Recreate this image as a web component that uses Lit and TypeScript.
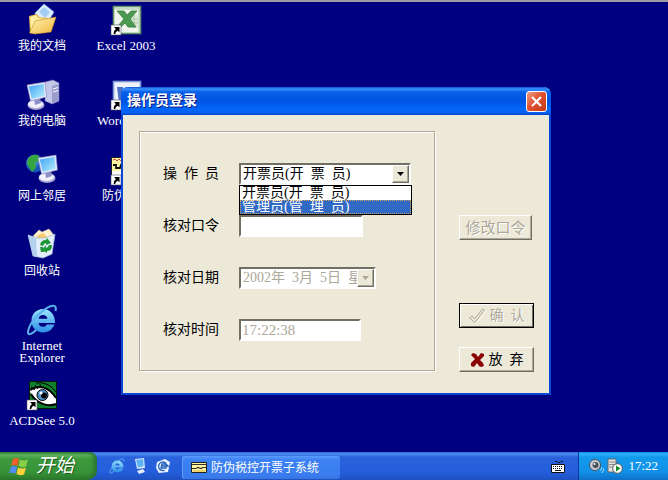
import { LitElement, html, css, svg, nothing } from "lit";
import { customElement, property, state } from "lit/decorators.js";
import { classMap } from "lit/directives/class-map.js";

const shortcut = svg`
  <rect x="1" y="21" width="10" height="10" fill="#fff" stroke="#556" stroke-width=".6"/>
  <path d="M4 23h5.500v5.500L7.800 26.800Q5.500 27.800 5.200 30H3.600Q3.400 26.500 5.900 24.900z" fill="#000"/>`;

const monitor = (x: number, y: number) => svg`
  <g transform="translate(${x} ${y})">
    <ellipse cx="9" cy="23" rx="8.500" ry="5" fill="#a9a8d2"/>
    <ellipse cx="8.500" cy="22" rx="7.500" ry="4" fill="#f0effb"/>
    <path d="M7 16l6-1 1 6-6 2z" fill="#8e8fc4"/>
    <path d="M0 3L18 0l1.500 15L3.500 19z" fill="#e6e9fa" stroke="#8187bd" stroke-width=".6"/>
    <path d="M1.800 4.500L16.500 2l1.200 11.800L4.800 17z" fill="url(#scr)"/>
  </g>`;

const defs = svg`
  <defs>
    <linearGradient id="scr" x1="0" y1="0" x2="1" y2="1">
      <stop offset="0" stop-color="#3aa2f4"/><stop offset="1" stop-color="#bdf0ff"/>
    </linearGradient>
    <linearGradient id="fold" x1="0" y1="0" x2="1" y2="1">
      <stop offset="0" stop-color="#fff6b8"/><stop offset="1" stop-color="#f0b53a"/>
    </linearGradient>
    <linearGradient id="ie" x1="0" y1="0" x2="0" y2="1">
      <stop offset="0" stop-color="#9be4ff"/><stop offset="1" stop-color="#2a8ee6"/>
    </linearGradient>
    <radialGradient id="globe" cx=".35" cy=".3">
      <stop offset="0" stop-color="#8fd4f8"/><stop offset="1" stop-color="#1557b8"/>
    </radialGradient>
  </defs>`;

const ieMark = svg`
  <path d="M17 5C10.500 5 5.500 10 5.500 16.800S10.500 28.500 17 28.500c5.400 0 9.600-3 11.300-8h-7.500c-.8 1.600-2 2.300-3.800 2.300-2.500 0-4.200-1.300-4.500-3.700H29C29.500 11 24 5 17 5zm-4.400 9.800c.5-2.400 2-3.700 4.400-3.700s3.900 1.300 4.400 3.700z" fill="url(#ie)"/>
  <path d="M10 26C5 31 1.500 31.500 2 27.500 3 20 12 9 21.500 3.600 27 .5 31 1 29.500 7" fill="none" stroke="#5cb0ee" stroke-width="2"/>`;

const art: Record<string, unknown> = {
  docs: svg`
    <path d="M9 9L18 0l10 8-8 13-9-4z" fill="#dceeff" stroke="#78aee0" stroke-width=".7"/>
    <path d="M13 8l5-5 6 5-5 6z" fill="#a4cdf3"/>
    <path d="M3 12l8-2 2 3 9 1-2 15H4z" fill="#e9b84a"/>
    <path d="M4 13l6-2 2 3 8 1-1 12H5z" fill="#fff0a4"/>
    <path d="M3.500 29L9 17l21-4-5 15-16 2z" fill="url(#fold)" stroke="#c98c1c" stroke-width=".6"/>`,
  computer: svg`
    <path d="M19 3l8-2 6 3v18l-7 3-7-3z" fill="#c5c7e8" stroke="#7a7cab" stroke-width=".5"/>
    <path d="M26 7l7-2v17l-7 3z" fill="#9a9ccc"/>
    <path d="M27 10l5-1.500M27 13l5-1.500" stroke="#fff"/>
    ${monitor(1, 3)}`,
  network: svg`
    <circle cx="9" cy="9.500" r="9" fill="url(#globe)"/>
    <path d="M2 5Q6 0 12 1l2 5-5 3 1 5-4 4-3-5-2-3z" fill="#35a53e"/>
    ${monitor(12, 1)}`,
  recycle: svg`
    <path d="M8 6l5-5 3 2 7-3 4 5 1 5H6z" fill="#fff1ce" stroke="#d8c9a0" stroke-width=".6"/>
    <path d="M11 7l6-3 4 4v4h-9z" fill="#f7c96c"/>
    <path d="M2 6l9 3h8l10-4-3 20-9 4-10-2z" fill="#e4eefa" stroke="#9ab9dc" stroke-width=".7"/>
    <path d="M2 6l8 3 1 19-4-1z" fill="#b5d0ee"/>
    <path d="M14 16q1-5 6-5l1-2 4 5-5 2v-2q-2 0-3 3zM26 16q0 6-5 6v2l-5-3 4-5v3q2 0 3-3zM14 18h3l1 5h-3z" fill="#1f9632"/>`,
  ie: ieMark,
  acd: svg`
    <rect x="3.500" y="2.500" width="27" height="27" fill="#11802d" stroke="#061c0a"/>
    <path d="M4 11C12 6 22 8 30 18v7C22 28 11 26 4 13z" fill="#fff"/>
    <path d="M4 11C13 5 23 8 30 19M5 15C11 25 22 28 30 25" fill="none" stroke="#000" stroke-width="2"/>
    <path d="M5 8l4 3M9 6l3 4M14 5l1 4M10 4Q22 2 30 13" stroke="#000" fill="none"/>
    <circle cx="16.500" cy="16" r="5.500" fill="#4d92c8" stroke="#000"/>
    <circle cx="18" cy="16.500" r="3" fill="#000"/><circle cx="15" cy="14" r="1.600" fill="#fff"/>
    ${shortcut}`,
  excel: svg`
    <rect x="3.500" y="2.500" width="27" height="27" fill="#f1f6ec" stroke="#5e9465" stroke-width="1.600"/>
    <path d="M5 5h24v23" fill="none" stroke="#b9d2b5" stroke-width="1.400"/>
    <path d="M20 11h8v13h-9z" fill="#dbe8d4"/><path d="M20 15h8M20 19h8M24 11v13" stroke="#a9c8a6"/>
    <path d="M7 7h7l3 4 4-4h6l-7 8 6 8h-8l-3-4-4 4H7l7-8z" fill="#4c9a50" stroke="#2c7038" stroke-width=".7"/>
    ${shortcut}`,
  word: svg`
    <rect x="3.500" y="2.500" width="27" height="27" fill="#edf2fc" stroke="#7d97d6" stroke-width="1.600"/>
    <path d="M7 8h6l2 12 3-12h5l-5 16h-5l-1-7-2 7H9z" fill="#4c70c4"/>
    ${shortcut}`,
  tax: svg`
    <rect x="1.500" y="3.500" width="30" height="26" fill="#fff7a0" stroke="#222"/>
    <path d="M3 6l2-1 2 2 2-2 2 2 2-2" stroke="#c44" fill="none"/>
    <path d="M3 11h3v3h4l1-3 3 2" stroke="#111" stroke-width="1.800" fill="none"/>
    <path d="M2 17h10v4H2z" fill="#fff"/>
    ${shortcut}`,
};

interface Shortcut { icon: string; label: string; }

const shortcuts: Shortcut[] = [
  { icon: "docs", label: "我的文档" },
  { icon: "computer", label: "我的电脑" },
  { icon: "network", label: "网上邻居" },
  { icon: "recycle", label: "回收站" },
  { icon: "ie", label: "Internet Explorer" },
  { icon: "acd", label: "ACDSee 5.0" },
  { icon: "excel", label: "Excel 2003" },
  { icon: "word", label: "Word 2003" },
  { icon: "tax", label: "防伪税控" },
];

const operators = ["开票员(开\u2002票\u2002员)", "管理员(管\u2002理\u2002员)"];

@customElement("desktop-icon")
class DesktopIcon extends LitElement {
  @property() icon = "";
  @property() label = "";

  static styles = css`
    :host { display: block; padding-top: 2px; }
    .link {
      display: flex; flex-direction: column; align-items: center; gap: 4px;
      color: #fff; text-decoration: none; text-align: center;
      font-size: 12px; line-height: 12px;
    }
    .latin { font-size: 13px; }
    .pic { width: 32px; height: 32px; overflow: visible; }
    .label { max-width: 70px; }
  `;

  render() {
    const latin = /^[A-Z]/.test(this.label);
    return html`<a class=${classMap({ link: true, latin })} href="#">
      <svg class="pic" viewBox="0 0 32 32" aria-hidden="true">${defs}${art[this.icon] ?? nothing}</svg>
      <span class="label">${this.label}</span>
    </a>`;
  }
}

@customElement("login-dialog")
class LoginDialog extends LitElement {
  @state() private selected = 0;
  @state() private hot = 1;

  static styles = css`
    :host {
      display: block; box-sizing: border-box; width: 430px; max-width: 100%;
      background: #ece9d8; border: 2px solid #0a45d8; border-top: 0;
      border-radius: 7px 7px 0 0; font-size: 14px; line-height: 14px; color: #000;
    }
    .title {
      display: flex; align-items: center; justify-content: space-between;
      height: 28px; margin: 0 -2px; padding: 0 4px 0 6px; box-sizing: border-box;
      border-radius: 7px 7px 0 0; color: #fff; text-shadow: 1px 1px #0a1883;
      background: linear-gradient(#0a50d8 0, #3a93ff 2px, #0a5fe8 5px, #0054e3 14px, #0466fb 22px, #0560f0 26px, #0040c0 28px);
    }
    .heading { margin: 0; font-size: 14px; line-height: 28px; }
    .close {
      width: 21px; height: 21px; padding: 0; border: 1px solid #fff; border-radius: 3px;
      background: linear-gradient(135deg, #f0a088, #e1512f 45%, #c23a16); display: grid; place-items: center;
    }
    .body { display: flex; gap: 24px; padding: 16px 15px 21px 16px; }
    .group {
      flex: 1; min-width: 0; margin: 0; padding: 31px 0 29px 23px; box-sizing: border-box;
      border: 1px solid #aca899; box-shadow: inset 1px 1px #fff, 1px 1px #fff;
      display: flex; flex-direction: column; gap: 30px; align-self: flex-start;
    }
    .row { display: flex; align-items: center; gap: 20px; height: 22px; }
    .label { width: 56px; text-align-last: justify; white-space: nowrap; }
    .field { position: relative; display: flex; }
    .box {
      box-sizing: border-box; width: 100%; height: 22px; margin: 0; padding: 0 2px;
      appearance: none; border: 2px solid; border-color: #716f64 #fff #fff #716f64; border-radius: 0;
      background: #fff; color: #000; font-family: inherit; font-size: 14px; line-height: 18px; outline: 0;
    }
    .box:disabled { color: #aca899; opacity: 1; }
    .time { font-size: 15px; padding: 0 1px; }
    .w-op { width: 172px; }
    .w-pw { width: 124px; }
    .w-date { width: 137px; }
    .w-time { width: 122px; }
    .arrow {
      position: absolute; right: 2px; top: 2px; width: 17px; height: 18px; box-sizing: border-box;
      background: #ece9d8; border: 1px solid; border-color: #fff #716f64 #716f64 #fff;
      box-shadow: inset -1px -1px #aca899; display: grid; place-items: center; pointer-events: none;
    }
    .arrow.off { color: #aca899; }
    .list {
      position: absolute; z-index: 2; left: 0; top: 100%; width: 173px; box-sizing: border-box;
      margin: 0; padding: 0; list-style: none; border: 1px solid #000; background: #fff;
    }
    .item { height: 14px; padding: 0 2px; white-space: nowrap; }
    .item.hot { background: #316ac5; color: #fff; outline: 1px dotted #d0a060; outline-offset: -1px; }
    .actions { display: flex; flex-direction: column; width: 75px; padding-top: 84px; }
    .btn {
      height: 25px; padding: 0; border: 1px solid; border-color: #fff #716f64 #716f64 #fff;
      box-shadow: inset -1px -1px #aca899; background: #ece9d8; color: #000; border-radius: 0;
      font-family: inherit; font-size: 14px; line-height: 14px; white-space: nowrap;
      display: flex; align-items: center; justify-content: center; gap: 4px;
    }
    .btn:disabled { color: #aca899; text-shadow: 1px 1px #fff; }
    .change { width: 73px; font-size: 15px; }
    .primary { margin-top: 63px; border-color: #000; box-shadow: inset 1px 1px #fff, inset -1px -1px #716f64; }
    .cancel { margin-top: 19px; }
    .caption { width: 35px; text-align-last: justify; }
  `;

  private arrow(off = false) {
    return html`<span class=${classMap({ arrow: true, off })}>
      <svg width="7" height="4" viewBox="0 0 7 4" aria-hidden="true"><path d="M0 0h7L3.500 4z" fill="currentColor"/></svg>
    </span>`;
  }

  render() {
    return html`
      <header class="title">
        <h1 class="heading">操作员登录</h1>
        <button class="close" aria-label="关闭">
          <svg width="13" height="13" viewBox="0 0 13 13" aria-hidden="true">
            <path d="M2 2l9 9M11 2l-9 9" stroke="#fff" stroke-width="2.200"/>
          </svg>
        </button>
      </header>
      <form class="body" @submit=${(e: Event) => e.preventDefault()}>
        <div class="group">
          <div class="row">
            <label class="label" for="op">操 作 员</label>
            <div class="field w-op">
              <select class="box" id="op">
                ${operators.map((o, i) => html`<option ?selected=${i === this.selected}>${o}</option>`)}
              </select>
              ${this.arrow()}
              <ul class="list" role="listbox" aria-label="操作员">
                ${operators.map((o, i) => html`<li role="option" aria-selected=${i === this.hot}
                  class=${classMap({ item: true, hot: i === this.hot })}
                  @mouseenter=${() => (this.hot = i)} @click=${() => (this.selected = i)}>${o}</li>`)}
              </ul>
            </div>
          </div>
          <div class="row">
            <label class="label" for="pw">核对口令</label>
            <div class="field w-pw"><input class="box" id="pw" type="password"></div>
          </div>
          <div class="row">
            <label class="label" for="date">核对日期</label>
            <div class="field w-date">
              <select class="box" id="date" disabled><option>2002年${"\u2002"}3月${"\u2002"}5日${"\u2002"}星期二</option></select>
              ${this.arrow(true)}
            </div>
          </div>
          <div class="row">
            <label class="label" for="time">核对时间</label>
            <div class="field w-time"><input class="box time" id="time" value="17:22:38" disabled></div>
          </div>
        </div>
        <div class="actions">
          <button class="btn change" type="button" disabled>修改口令</button>
          <button class="btn primary" disabled>
            <svg width="17" height="16" viewBox="0 0 17 16" aria-hidden="true">
              <path d="M1.500 11l3-2 2 3 8-10 2 1-9.500 12.500z" fill="none" stroke="#fff"/>
              <path d="M.5 10l3-2 2 3 8-10 2 1L6 14.500z" fill="#ece9d8" stroke="#aca899"/>
            </svg>
            <span class="caption">确 认</span>
          </button>
          <button class="btn cancel" type="button">
            <svg width="15" height="15" viewBox="0 0 15 15" aria-hidden="true">
              <path d="M1 3l2-2 3 1 2 3 3-4 3 1v2l-4 4 3 3 1 3-3 1-2-1-2-3-3 4-3-1v-3l4-4z" fill="#8b0000"/>
            </svg>
            <span class="caption">放 弃</span>
          </button>
        </div>
      </form>`;
  }
}

@customElement("task-bar")
class TaskBar extends LitElement {
  static styles = css`
    :host {
      display: flex; align-items: stretch; height: 28px; color: #fff; font-size: 12px;
      background: linear-gradient(#3168d5 0, #4a8df0 2px, #2a62dc 5px, #245edb 20px, #1e50c0 28px);
    }
    .start {
      width: 97px; padding: 0 0 0 9px; border: 0; border-radius: 0 8px 10px 0; color: #fff;
      display: flex; align-items: center; gap: 6px;
      font-family: inherit; font-size: 19px; line-height: 26px; font-style: italic; text-shadow: 1px 1px #1c5a1c;
      background: linear-gradient(#388238 0, #5fb55f 3px, #3c9a3c 7px, #389338 20px, #2a7a2a 28px);
      box-shadow: inset -3px 0 4px #2a7030;
    }
    .quick { display: flex; align-items: center; gap: 7px; padding-left: 12px; }
    .tool { width: 16px; height: 16px; padding: 0; border: 0; background: none; display: block; }
    .task {
      flex: 0 1 158px; margin: 4px 0 1px 11px; padding: 0 0 0 9px; border: 0; border-radius: 3px;
      background: linear-gradient(#5a9bff 0, #3c81f3 4px, #3a7cee 20px, #3570dc 24px);
      box-shadow: inset 1px 0 #5c9dff; color: #fff; font-family: inherit; font-size: 12px; line-height: 16px;
      display: flex; align-items: center; gap: 4px; white-space: nowrap;
    }
    .lang { margin-left: auto; padding-right: 13px; align-self: center; line-height: 0; }
    .tray {
      width: 90px; box-sizing: border-box; padding: 0 10px; display: flex; align-items: center; gap: 3px;
      border-left: 1px solid #0a3a9a;
      background: linear-gradient(#0f8be6 0, #2cb0f8 2px, #129aec 5px, #1290e8 20px, #0c70c8 28px);
    }
    .clock { margin-left: auto; font-size: 13px; }
  `;

  render() {
    return html`
      <button class="start">
        <svg width="21" height="19" viewBox="0 0 21 19" aria-hidden="true">
          <path d="M4 2Q7 0 10 2L8.500 9Q5 7 2 9z" fill="#f0602a"/>
          <path d="M11 2.500Q15 4.500 19 2.500L17 9.500Q13 11 9.500 9z" fill="#86cf46"/>
          <path d="M2 10Q5 8 8 10L6.500 16.500Q3 15 0 16.500z" fill="#4f8df5"/>
          <path d="M9 10.500Q13 12.500 17 10.500L15 17.500Q11 19 7.500 17z" fill="#fcd03a"/>
        </svg>开始</button>
      <nav class="quick">
        <button class="tool" aria-label="Internet Explorer">
          <svg width="16" height="16" viewBox="0 0 32 32" aria-hidden="true">${defs}${ieMark}</svg>
        </button>
        <button class="tool" aria-label="显示桌面">
          <svg width="16" height="16" viewBox="0 0 16 16" aria-hidden="true">
            <path d="M3 1l9-1 1 10-8 1z" fill="#d8e6fb"/><path d="M4 2l7-1 .7 7L6 9.500z" fill="#5db4f4"/>
            <path d="M5 13l6-2 2 3-6 2z" fill="#e8ecf8"/>
          </svg>
        </button>
        <button class="tool" aria-label="Outlook Express">
          <svg width="16" height="16" viewBox="0 0 16 16" aria-hidden="true">
            <path d="M2 4l8-3 5 3-2 10-9 1-3-5z" fill="#e9f3ff"/>
            <path d="M11 5Q5 2 3.500 8q0 5 6 4.500M6 8h7l-2-2M6 10h5V6H7z" fill="none" stroke="#2462b8" stroke-width="1.300"/>
          </svg>
        </button>
      </nav>
      <button class="task">
        <svg width="16" height="11" viewBox="0 0 16 11" aria-hidden="true">
          <path d="M.5.5h15v10H.5z" fill="#fff3a0" stroke="#222"/>
          <path d="M1 2.500h14" stroke="#333"/>
          <path d="M1 6.500h4l2-1 3 1 2-1h3" fill="none" stroke="#333" stroke-width="1.200"/>
          <path d="M2 9h12" stroke="#e0b040"/>
        </svg>
        <span>防伪税控开票子系统</span>
      </button>
      <span class="lang">
        <svg width="14" height="13" viewBox="0 0 14 13" role="img" aria-label="键盘">
          <path d="M4 1.500h2l1 1h2l1-1h2" fill="none" stroke="#111"/>
          <path d="M.5 4.500h13v8H.5z" fill="#fff" stroke="#111"/>
          <path d="M2 6.500h10M2 8.500h10" stroke="#111" stroke-dasharray="1 1"/><path d="M4 10.500h6" stroke="#111"/>
        </svg>
      </span>
      <div class="tray">
        <svg width="15" height="16" viewBox="0 0 15 16" role="img" aria-label="音量">
          <circle cx="6" cy="7" r="5.500" fill="#c9cdd3" stroke="#4c525c"/>
          <circle cx="6.500" cy="7" r="3" fill="#4a505a"/><circle cx="5.500" cy="6" r="1" fill="#fff"/>
          <path d="M11 13q2-2 2-4M13 15q2-3 2-5" stroke="#9fd3ff" fill="none"/>
        </svg>
        <svg width="16" height="16" viewBox="0 0 16 16" role="img" aria-label="服务">
          <path d="M1 1h8v13H1z" fill="#e4e4e0" stroke="#666"/><path d="M2 4h6M2 6.500h6M2 9h6" stroke="#888"/>
          <circle cx="10.500" cy="10.500" r="4.800" fill="#fff" stroke="#555"/>
          <path d="M9 7.500l4.500 3L9 13.500z" fill="#128a20"/>
        </svg>
        <time class="clock">17:22</time>
      </div>`;
  }
}

@customElement("app-root")
class AppRoot extends LitElement {
  static styles = css`
    :host {
      display: flex; flex-direction: column; min-height: 100vh; position: relative;
      background: #000080; font-family: "Liberation Serif", "Noto Sans CJK SC", sans-serif;
    }
    .desktop {
      flex: 1; border-top: 2px solid #9c9ca8; display: grid; grid-auto-flow: column;
      grid-template-rows: repeat(6, 75px); grid-auto-columns: 84px; justify-content: start;
    }
    .stage { position: absolute; inset: 2px 0 0 4px; display: grid; place-items: center; pointer-events: none; }
    .window { pointer-events: auto; }
  `;

  render() {
    return html`
      <main class="desktop">
        ${shortcuts.map((s) => html`<desktop-icon .icon=${s.icon} .label=${s.label}></desktop-icon>`)}
      </main>
      <div class="stage"><login-dialog class="window"></login-dialog></div>
      <task-bar></task-bar>`;
  }
}
